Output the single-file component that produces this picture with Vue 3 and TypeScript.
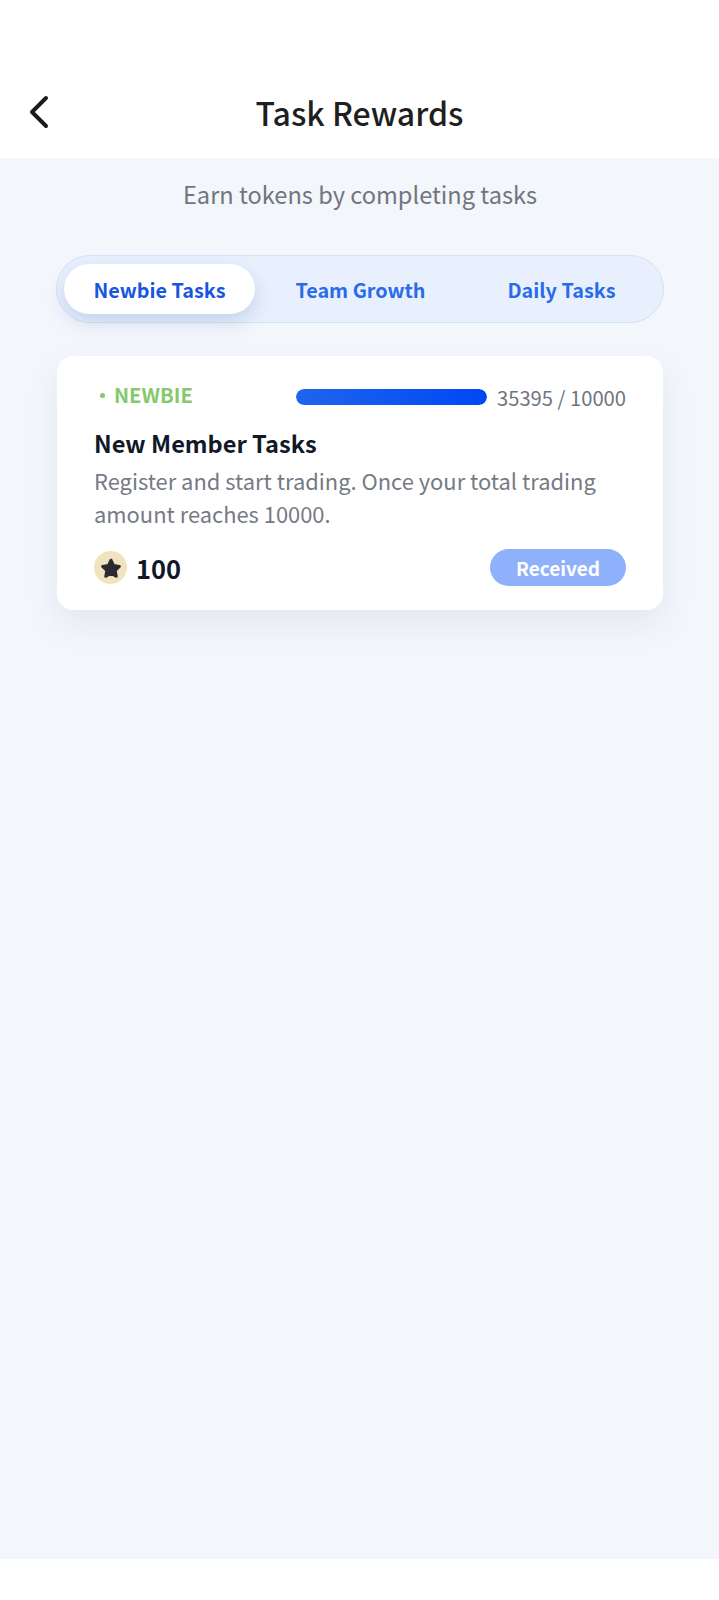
<script setup lang="ts">
import { ref } from "vue";

interface Tab {
	id: string;
	label: string;
}

const tabs: Tab[] = [
	{ id: "newbie", label: "Newbie Tasks" },
	{ id: "team", label: "Team Growth" },
	{ id: "daily", label: "Daily Tasks" },
];

const active = ref("newbie");
const current = 35395;
const target = 10000;
const percent = Math.min(100, (current / target) * 100);
</script>

<template>
	<div class="page">
		<header class="nav">
			<button type="button" class="back" aria-label="Back">
				<svg width="24" height="36" viewBox="0 0 24 36" fill="none">
					<path
						d="M19 4 5 18 19 32"
						stroke="#1c1c1e"
						stroke-width="4"
						stroke-linecap="round"
						stroke-linejoin="round"
					/>
				</svg>
			</button>
			<h1 class="title">Task Rewards</h1>
		</header>

		<main class="content">
			<p class="sub">Earn tokens by completing tasks</p>

			<div class="tabs">
				<button
					v-for="tab in tabs"
					:key="tab.id"
					type="button"
					class="tab"
					:class="{ on: active === tab.id }"
					@click="active = tab.id"
				>
					{{ tab.label }}
				</button>
			</div>

			<section class="card">
				<div class="card-top">
					<span class="tag"><i class="dot"></i>NEWBIE</span>
					<div class="progress">
						<div class="track">
							<div class="fill" :style="{ width: percent + '%' }"></div>
						</div>
						<span class="count">{{ current }} / {{ target }}</span>
					</div>
				</div>
				<h2 class="card-title">New Member Tasks</h2>
				<p class="card-desc">
					Register and start trading. Once your total trading amount reaches
					10000.
				</p>
				<div class="card-foot">
					<div class="reward">
						<span class="coin">
							<svg width="24" height="24" viewBox="0 0 24 24">
								<path
									d="M12 4.2 14.6 9.6 20.4 10.4 16.2 14.4 17.2 20.2 12 17.4 6.8 20.2 7.8 14.4 3.6 10.4 9.4 9.6Z"
									fill="#2a2a30"
									stroke="#2a2a30"
									stroke-width="3"
									stroke-linejoin="round"
								/>
							</svg>
						</span>
						<span class="amount">100</span>
					</div>
					<button type="button" class="received">Received</button>
				</div>
			</section>
		</main>

		<div class="bottom"></div>
	</div>
</template>

<style>
html,
body {
	margin: 0;
	background: #fff;
}
</style>

<style scoped>
.page {
	display: flex;
	flex-direction: column;
	height: 1600px;
	font-family: "Noto Sans CJK SC", "Noto Sans", sans-serif;
	background: #fff;
}

.nav {
	position: relative;
	flex-shrink: 0;
	height: 158px;
	display: flex;
	align-items: flex-end;
	justify-content: center;
	box-sizing: border-box;
	padding-bottom: 23px;
}
.back {
	position: absolute;
	left: 27px;
	top: 94px;
	padding: 0;
	border: none;
	background: none;
	line-height: 0;
}
.title {
	margin: 0;
	font-size: 32px;
	line-height: 46px;
	font-weight: 500;
	color: #1f1f22;
}

.content {
	flex: 1;
	display: flex;
	flex-direction: column;
	background: #f3f6fb;
	padding: 0 55px 0 56px;
}

.sub {
	margin: 18px 0 0;
	font-size: 23.6px;
	line-height: 36px;
	color: #70757f;
	text-align: center;
}

.tabs {
	margin-top: 43px;
	height: 68px;
	box-sizing: border-box;
	display: flex;
	align-items: center;
	gap: 10px;
	padding: 0 6px 0 7px;
	background: #e8f0fd;
	border: 1px solid #d5e1f6;
	border-radius: 34px;
}
.tab {
	flex: 1;
	height: 50px;
	padding: 0;
	border: none;
	border-radius: 25px;
	background: none;
	font-family: inherit;
	font-size: 19.8px;
	font-weight: 700;
	color: #2a6bea;
}
.tab.on {
	background: #fff;
	color: #1756e0;
	box-shadow: 0 8px 18px rgba(110, 135, 190, 0.28);
}

.card {
	margin: 33px 1px 0;
	height: 254px;
	box-sizing: border-box;
	padding: 22px 37px 0;
	background: #fff;
	border-radius: 16px;
	box-shadow: 0 14px 30px rgba(120, 140, 180, 0.13);
}
.card-top {
	display: flex;
	align-items: center;
	justify-content: space-between;
}
.tag {
	display: flex;
	align-items: center;
	padding-left: 6px;
	font-size: 20.2px;
	line-height: 30px;
	font-weight: 700;
	color: #86c96d;
}
.dot {
	width: 5px;
	height: 5px;
	margin-right: 9px;
	border-radius: 50%;
	background: #86c96d;
}
.progress {
	display: flex;
	align-items: center;
	gap: 10px;
	padding-top: 4px;
}
.track {
	width: 191px;
	height: 16px;
	border-radius: 8px;
	background: #e4ebf7;
	overflow: hidden;
}
.fill {
	height: 100%;
	border-radius: 8px;
	background: linear-gradient(90deg, #1f65ee, #0047f5);
}
.count {
	padding-top: 2px;
	font-size: 20.2px;
	line-height: 28px;
	color: #70757f;
}

.card-title {
	margin: 13px 0 0;
	font-size: 23.6px;
	line-height: 36px;
	font-weight: 700;
	color: #111827;
}
.card-desc {
	margin: 4px 0 0;
	font-size: 21.9px;
	line-height: 32.6px;
	color: #757a85;
}

.card-foot {
	margin-top: 19px;
	display: flex;
	align-items: center;
	justify-content: space-between;
}
.reward {
	display: flex;
	align-items: center;
	gap: 9px;
}
.coin {
	width: 33px;
	height: 33px;
	display: flex;
	align-items: center;
	justify-content: center;
	border-radius: 50%;
	background: #f1e3bf;
}
.amount {
	font-size: 25.5px;
	line-height: 34px;
	font-weight: 700;
	color: #111827;
}
.received {
	width: 136px;
	height: 37px;
	padding: 0;
	border: none;
	border-radius: 19px;
	background: #8fb1fb;
	color: #fff;
	font-family: inherit;
	font-size: 19px;
	font-weight: 700;
}

.bottom {
	flex-shrink: 0;
	height: 41px;
	background: #fff;
}
</style>
